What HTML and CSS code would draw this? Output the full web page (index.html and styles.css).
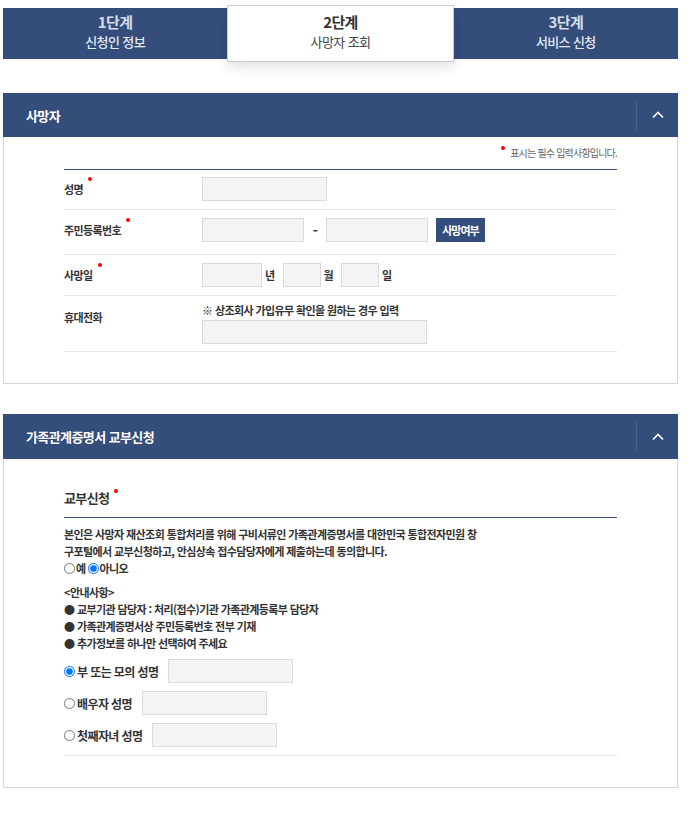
FILE: index.html
```html
<!DOCTYPE html>
<html lang="ko">
<head>
    <meta charset="UTF-8">
    <meta name="viewport" content="width=device-width, initial-scale=1.0">
    <title>사망자 조회</title>
    <link rel="stylesheet" href="styles.css">
</head>
<body>

    <div class="wrap">

        <!-- Steps -->
        <div class="steps">
            <div class="step">
                <strong>1단계</strong>
                <span>신청인 정보</span>
            </div>
            <div class="step on">
                <strong>2단계</strong>
                <span>사망자 조회</span>
            </div>
            <div class="step">
                <strong>3단계</strong>
                <span>서비스 신청</span>
            </div>
        </div>

        <!-- 사망자 -->
        <div class="panel">
            <div class="panel-head">
                <h2>사망자</h2>
                <button class="fold" type="button">
                    <svg width="12" height="8" viewBox="0 0 12 8"><polyline points="1,6.5 6,1.5 11,6.5" fill="none" stroke="#fff" stroke-width="1.6"/></svg>
                </button>
            </div>
            <div class="panel-body">
                <p class="req-note"><span class="dot"></span>표시는 필수 입력사항입니다.</p>

                <div class="form">
                    <div class="row">
                        <label class="req">성명</label>
                        <div class="field">
                            <input type="text" class="w125">
                        </div>
                    </div>
                    <div class="row row-ssn">
                        <label class="req">주민등록번호</label>
                        <div class="field">
                            <input type="text" class="w102">
                            <span class="dash">-</span>
                            <input type="text" class="w102">
                            <button class="btn-check" type="button">사망여부</button>
                        </div>
                    </div>
                    <div class="row row-date">
                        <label class="req">사망일</label>
                        <div class="field">
                            <input type="text" class="w60">
                            <span class="unit">년</span>
                            <input type="text" class="w38">
                            <span class="unit">월</span>
                            <input type="text" class="w38">
                            <span class="unit">일</span>
                        </div>
                    </div>
                    <div class="row row-phone">
                        <label>휴대전화</label>
                        <div class="field field-col">
                            <p class="field-note">※ 상조회사 가입유무 확인을 원하는 경우 입력</p>
                            <input type="text" class="w225">
                        </div>
                    </div>
                </div>
            </div>
        </div>

        <!-- 가족관계증명서 교부신청 -->
        <div class="panel">
            <div class="panel-head">
                <h2>가족관계증명서 교부신청</h2>
                <button class="fold" type="button">
                    <svg width="12" height="8" viewBox="0 0 12 8"><polyline points="1,6.5 6,1.5 11,6.5" fill="none" stroke="#fff" stroke-width="1.6"/></svg>
                </button>
            </div>
            <div class="panel-body body-issue">
                <h3 class="req">교부신청</h3>

                <p class="agree">본인은 사망자 재산조회 통합처리를 위해 구비서류인 가족관계증명서를 대한민국 통합전자민원 창<br>구포털에서 교부신청하고, 안심상속 접수담당자에게 제출하는데 동의합니다.</p>
                <div class="choice">
                    <input type="radio" name="agree" id="agreeY"><label for="agreeY">예</label>
                    <input type="radio" name="agree" id="agreeN" checked><label for="agreeN">아니오</label>
                </div>

                <div class="guide">
                    <p>&lt;안내사항&gt;</p>
                    <p>● 교부기관 담당자 : 처리(접수)기관 가족관계등록부 담당자</p>
                    <p>● 가족관계증명서상 주민등록번호 전부 기재</p>
                    <p>● 추가정보를 하나만 선택하여 주세요</p>
                </div>

                <div class="options">
                    <div class="opt">
                        <input type="radio" name="who" id="who1" checked>
                        <label for="who1">부 또는 모의 성명</label>
                        <input type="text" class="w125">
                    </div>
                    <div class="opt">
                        <input type="radio" name="who" id="who2">
                        <label for="who2">배우자 성명</label>
                        <input type="text" class="w125">
                    </div>
                    <div class="opt">
                        <input type="radio" name="who" id="who3">
                        <label for="who3">첫째자녀 성명</label>
                        <input type="text" class="w125">
                    </div>
                </div>
            </div>
        </div>

    </div>

</body>
</html>
```

FILE: styles.css
```css
body {
    margin: 0;
    font-family: "Noto Sans CJK KR", "Noto Sans", sans-serif;
    color: #333;
    letter-spacing: -0.6px;
    background: #fff;
}

p, h2, h3 {
    margin: 0;
}

.wrap {
    width: 675px;
    margin-left: 3px;
    padding-bottom: 30px;
}

/* steps */
.steps {
    display: flex;
    height: 51px;
    margin-top: 8px;
    background: #344d7b;
}
.step {
    flex: 1;
    display: flex;
    flex-direction: column;
    align-items: center;
    gap: 1px;
    padding-top: 4px;
    color: #e3e8f1;
}
.step strong {
    font-size: 15px;
    line-height: 20px;
    color: #d5dcea;
}
.step span {
    font-size: 13px;
    line-height: 18px;
    font-weight: 500;
}
.step.on {
    margin: -3px 0;
    padding-top: 6px;
    background: #fff;
    border: 1px solid #c6cedc;
    box-shadow: 0 5px 12px rgba(0, 0, 0, 0.12);
    color: #444;
}
.step.on strong {
    color: #333;
}
.step.on span {
    font-weight: 400;
}

/* panel */
.panel {
    margin-top: 34px;
}
.panel + .panel {
    margin-top: 30px;
}
.panel-head {
    display: flex;
    align-items: center;
    justify-content: space-between;
    height: 44px;
    padding-left: 23px;
    background: #344d7b;
}
.panel + .panel .panel-head {
    height: 45px;
}
.panel-head h2 {
    color: #fff;
    font-size: 13px;
    font-weight: 700;
}
.fold {
    width: 42px;
    height: 31px;
    padding: 0;
    border: 0;
    border-left: 1px solid rgba(255, 255, 255, 0.12);
    background: transparent;
    display: flex;
    align-items: center;
    justify-content: center;
}

.panel-body {
    border: 1px solid #d6d6d6;
    border-top: 0;
    padding: 0 60px 31px;
}

.req-note {
    padding-top: 9px;
    margin-bottom: 9px;
    text-align: right;
    font-size: 10px;
    line-height: 14px;
    color: #666;
    letter-spacing: -0.8px;
}
.dot {
    display: inline-block;
    width: 4px;
    height: 4px;
    border-radius: 50%;
    background: #f00;
    vertical-align: middle;
    position: relative;
    top: -6px;
    margin-right: 5px;
}

.req::after {
    content: "";
    display: inline-block;
    width: 4px;
    height: 4px;
    border-radius: 50%;
    background: #f00;
    margin-left: 5px;
    vertical-align: middle;
    position: relative;
    top: -12px;
}

/* form rows */
.form {
    border-top: 1px solid #344d7b;
}
.row {
    display: flex;
    align-items: center;
    padding: 7px 0 8px;
    border-bottom: 1px solid #e6e6e6;
}
.row-ssn {
    padding: 8px 0 12px;
}
.row-date {
    padding: 8px 0 8px;
}
.row-phone {
    align-items: flex-start;
    padding: 7px 0 7px;
}
.row label {
    width: 138px;
    flex-shrink: 0;
    font-size: 11px;
    font-weight: 700;
    line-height: 14px;
}
.row-phone label {
    padding-top: 7px;
}
.field {
    display: flex;
    align-items: center;
}
.field-col {
    flex-direction: column;
    align-items: flex-start;
    gap: 3px;
}
.field-note {
    font-size: 11px;
    font-weight: 700;
    line-height: 14px;
}

input[type="text"] {
    box-sizing: border-box;
    height: 24px;
    margin: 0;
    border: 1px solid #dadada;
    background: #f4f4f4;
}
.w38 { width: 38px; }
.w60 { width: 60px; }
.w102 { width: 102px; }
.w125 { width: 125px; }
.w225 { width: 225px; }

.dash {
    width: 22px;
    text-align: center;
    font-size: 14px;
    font-weight: 700;
}
.unit {
    margin: 0 8px 0 3px;
    font-size: 11px;
    font-weight: 700;
}
.btn-check {
    width: 49px;
    height: 24px;
    margin-left: 8px;
    padding: 0;
    border: 0;
    background: #344d7b;
    color: #fff;
    font-family: inherit;
    font-size: 11px;
    font-weight: 700;
    letter-spacing: -1px;
}

/* 교부신청 */
.body-issue {
    padding-top: 30px;
}
.body-issue h3 {
    font-size: 13px;
    line-height: 18px;
    padding-bottom: 10px;
    border-bottom: 1px solid #344d7b;
}
.body-issue h3.req::after {
    top: -8px;
}
.agree {
    margin-top: 8px;
    font-size: 11px;
    font-weight: 700;
    line-height: 17px;
}
.choice {
    display: flex;
    align-items: center;
    height: 16px;
    font-size: 11px;
    font-weight: 700;
}
input[type="radio"] {
    width: 11px;
    height: 11px;
    margin: 0 1px 0 0;
}
.choice label {
    margin-right: 2px;
}

.guide {
    margin-top: 8px;
    font-size: 11px;
    font-weight: 700;
    line-height: 17px;
}

.options {
    margin-top: 7px;
    padding-bottom: 8px;
    border-bottom: 1px solid #e6e6e6;
    display: flex;
    flex-direction: column;
    gap: 8px;
}
.opt {
    display: flex;
    align-items: center;
}
.opt input[type="radio"] {
    margin-right: 2px;
}
.opt label {
    margin-right: 10px;
    font-size: 12px;
    font-weight: 700;
}
```
